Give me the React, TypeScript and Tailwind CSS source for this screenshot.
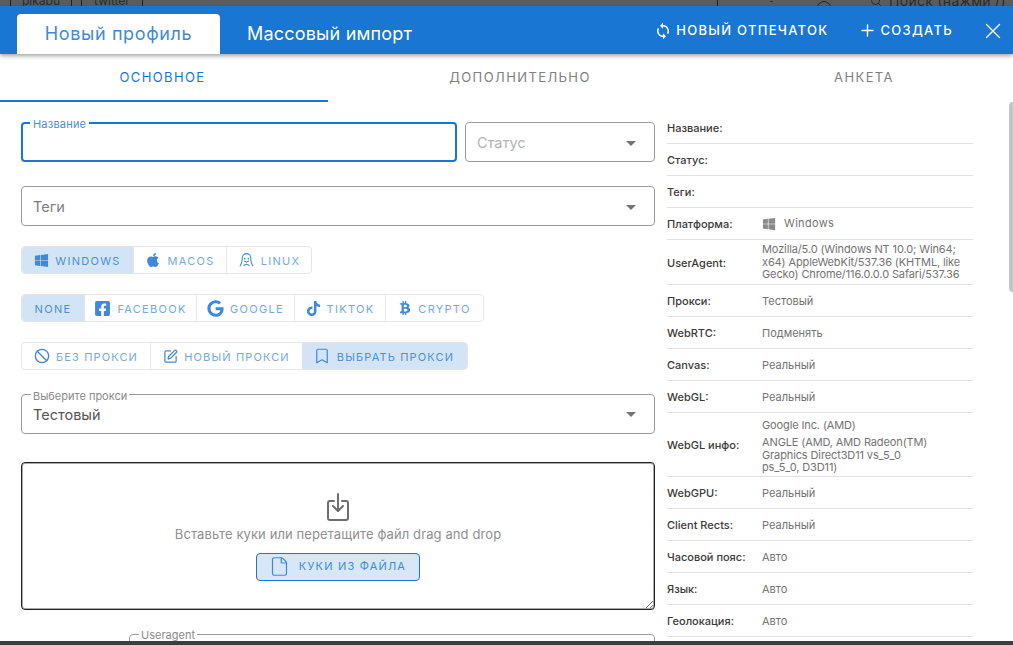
import React from "react";
import { FaWindows, FaApple, FaFacebookSquare, FaGoogle, FaTiktok, FaBtc } from "react-icons/fa";
import { PiLinuxLogo } from "react-icons/pi";
import { MdSync } from "react-icons/md";
import { Ban, SquarePen, Bookmark, File, Plus, X, Search } from "lucide-react";

type Seg = { label: string; icon?: React.ReactNode; w: string; active?: boolean };

function Group({ items, tight }: { items: Seg[]; tight?: boolean }) {
  return (
    <div className="flex h-7 w-fit rounded border border-[#e6e6e6] overflow-hidden">
      {items.map((s, i) => (
        <div
          key={s.label}
          className={`${s.w} flex items-center justify-center gap-1.5 text-[11px] ${tight ? "tracking-[1.15px]" : "tracking-[1.3px]"} ${i > 0 ? "border-l border-[#e6e6e6]" : ""} ${s.active ? "bg-[#d3e4f6] text-[#4a90d9]" : "text-[#74aae3]"}`}
        >
          {s.icon ? <span className="text-[#3f8ad8] flex items-center">{s.icon}</span> : null}
          <span className="pt-[2px]">{s.label}</span>
        </div>
      ))}
    </div>
  );
}

function Caret() {
  return <div className="w-0 h-0 border-x-[5px] border-x-transparent border-t-[5px] border-t-[#757575]" />;
}

function Row({ label, children, h = "h-8", tight }: { label: string; children?: React.ReactNode; h?: string; tight?: boolean }) {
  return (
    <div className={`${h} flex items-center border-b border-[#e0e0e0] shrink-0`}>
      <div className="w-[95px] shrink-0 text-[11px] font-medium text-[#3a3a3a] pt-[2px]">{label}</div>
      <div className={`text-[11px] text-[#737373] ${tight ? "leading-[12.5px] tracking-[-0.12px]" : "pt-[2px]"}`}>{children}</div>
    </div>
  );
}

export default function App() {
  return (
    <div className="relative w-[1013px] h-[645px] overflow-hidden flex flex-col bg-white font-['Inter','Roboto',sans-serif]">
      {/* strip of the page behind the dialog */}
      <div className="h-1.5 shrink-0 bg-[#5c5c5c] overflow-hidden flex items-end text-[12px] text-[#2b2b2b]">
        <div className="ml-[10px] w-[62px] h-4 border-x border-[#222] flex items-end justify-center shrink-0 leading-[10px] translate-y-[6px]"><span className="-translate-y-[6px]">pikabu</span></div>
        <div className="ml-[9px] w-[62px] h-4 border-x border-[#222] flex items-end justify-center shrink-0 leading-[10px] translate-y-[6px]"><span className="-translate-y-[6px]">twitter</span></div>
        <div className="ml-[574px] w-px h-1.5 bg-[#222] shrink-0" />
        <div className="ml-[52px] w-[3px] h-px bg-[#333] mb-[4px] shrink-0" />
        <div className="ml-[44px] w-[14px] h-[14px] shrink-0 rounded-full border border-[#222] translate-y-[9px]" />
        <div className="ml-[39px] shrink-0 flex items-center gap-[7px] translate-y-[2px] tracking-[0.3px] text-[14px] leading-[14px] whitespace-nowrap">
          <Search size={12} />
          <span>Поиск (нажми /)</span>
        </div>
      </div>

      {/* dialog header */}
      <div className="h-12 shrink-0 bg-[#1976d2] flex items-end relative z-10 shadow-[0_2px_4px_rgba(0,0,0,0.35)] text-white">
        <div className="ml-[17px] w-[203px] h-10 bg-white rounded-t flex items-center justify-center pb-[2px] text-[18px] tracking-[0.65px] text-[#3f8ad8]">Новый профиль</div>
        <div className="ml-[27px] h-10 flex items-center text-[18px] pb-[2px] tracking-[0.2px]">Массовый импорт</div>
        <div className="ml-auto h-12 flex items-center text-[13px] font-medium tracking-[1.28px] pr-[7px] pt-[1px]">
          <MdSync size={18} className="mr-1" />
          <span>НОВЫЙ ОТПЕЧАТОК</span>
          <Plus size={19} strokeWidth={1.8} className="ml-[30px] mr-[3px]" />
          <span>СОЗДАТЬ</span>
          <X size={26} strokeWidth={1.3} className="ml-[27px]" />
        </div>
      </div>

      {/* sub tabs */}
      <div className="h-12 shrink-0 flex text-[13px] tracking-[1.4px] text-[#808080]">
        <div className="w-[328px] shrink-0 flex items-center justify-center border-b-2 border-[#1976d2] text-[#1976d2] pt-[2px] pr-[3px]">ОСНОВНОЕ</div>
        <div className="w-[384px] shrink-0 flex items-center justify-center">ДОПОЛНИТЕЛЬНО</div>
        <div className="w-[304px] shrink-0 flex items-center justify-center">АНКЕТА</div>
      </div>

      {/* scrollable body */}
      <div className="flex-1 min-h-0 flex overflow-hidden relative">
        <div className="w-[634px] ml-[21px] shrink-0 pt-5 flex flex-col">
          <div className="flex gap-2 h-10 shrink-0">
            <div className="relative w-[436px] h-10 rounded border-2 border-[#1976d2]">
              <span className="absolute left-[7px] -top-[6px] bg-white px-[3px] text-[11px] leading-[12px] tracking-[0.2px] text-[#4a90d9]">Название</span>
            </div>
            <div className="w-[190px] h-10 rounded border border-[#9a9a9a] flex items-center justify-between pl-[11px] pr-[18px] pt-[2px] text-[14.5px] text-[#b3b3b3]">
              <span>Статус</span>
              <Caret />
            </div>
          </div>
          <div className="mt-[24px] h-10 shrink-0 rounded border border-[#9a9a9a] flex items-center justify-between pl-[11px] pr-[18px] pt-[2px] text-[14.5px] text-[#808080]">
            <span>Теги</span>
            <Caret />
          </div>

          <div className="mt-5">
            <Group items={[
              { label: "WINDOWS", icon: <FaWindows size={15} />, w: "w-[111px]", active: true },
              { label: "MACOS", icon: <FaApple size={16} />, w: "w-[93px]" },
              { label: "LINUX", icon: <PiLinuxLogo size={17} />, w: "w-[85px]" },
            ]} />
          </div>
          <div className="mt-5">
            <Group items={[
              { label: "NONE", w: "w-[62px]", active: true },
              { label: "FACEBOOK", icon: <FaFacebookSquare size={17} />, w: "w-[112px]" },
              { label: "GOOGLE", icon: <FaGoogle size={17} />, w: "w-[98px]" },
              { label: "TIKTOK", icon: <FaTiktok size={15} />, w: "w-[91px]" },
              { label: "CRYPTO", icon: <FaBtc size={14} />, w: "w-[98px]" },
            ]} />
          </div>
          <div className="mt-5">
            <Group tight items={[
              { label: "БЕЗ ПРОКСИ", icon: <Ban size={16} />, w: "w-[128px]" },
              { label: "НОВЫЙ ПРОКСИ", icon: <SquarePen size={15} />, w: "w-[152px]" },
              { label: "ВЫБРАТЬ ПРОКСИ", icon: <Bookmark size={18} strokeWidth={1.6} />, w: "w-[165px] pr-[3px]", active: true },
            ]} />
          </div>

          <div className="relative mt-6 h-10 shrink-0 rounded border border-[#9a9a9a] flex items-center justify-between pl-[11px] pr-[18px] pt-[1px] text-[14.5px] text-[#555]">
            <span className="absolute left-[9px] -top-[4px] bg-white px-[2px] text-[11px] leading-[11px] text-[#8a8a8a]">Выберите прокси</span>
            <span>Тестовый</span>
            <Caret />
          </div>

          <div className="relative mt-7 h-[148px] shrink-0 rounded border border-[#222] shadow-[inset_0_0_0_1px_#aaa] flex flex-col items-center pt-[30px]">
            <svg className="ml-[2px]" width="24" height="29" viewBox="0 0 24 29" fill="none" stroke="#6e6e6e" strokeWidth="2" strokeLinecap="round" strokeLinejoin="round">
              <path d="M7 8H3a2 2 0 0 0-2 2v15a2 2 0 0 0 2 2h16a2 2 0 0 0 2-2V10a2 2 0 0 0-2-2h-4" />
              <path d="M11 1v17" />
              <path d="M6 13l5 5 5-5" />
            </svg>
            <div className="mt-[3px] text-[13px] tracking-[0.1px] text-[#8f8f8f]">Вставьте куки или перетащите файл drag and drop</div>
            <div className="mt-2 w-[164px] h-7 rounded border border-[#1976d2] bg-[#d7e7f7] flex items-center justify-center gap-[9px] pr-[1px] text-[11px] tracking-[1.2px] text-[#3f8ad8]">
              <File size={21} strokeWidth={1.4} />
              <span>КУКИ ИЗ ФАЙЛА</span>
            </div>
            <svg className="absolute right-[1px] bottom-[1px]" width="8" height="8" viewBox="0 0 8 8" stroke="#777" strokeWidth="1">
              <path d="M1 8L8 1M5 8l3-3" />
            </svg>
          </div>

          <div className="relative mt-6 ml-[108px] h-10 shrink-0 rounded border border-[#9a9a9a]">
            <span className="absolute left-[9px] -top-[5px] bg-white px-[2px] text-[11px] leading-[11px] text-[#8a8a8a]">Useragent</span>
          </div>
        </div>

        {/* summary column */}
        <div className="w-[306px] ml-[12px] shrink-0 flex flex-col pt-[10px]">
          <Row label="Название:" />
          <Row label="Статус:" />
          <Row label="Теги:" />
          <Row label="Платформа:">
            <span className="flex items-center gap-2 -mt-[2px] tracking-[0.3px]">
              <FaWindows size={14} className="text-[#8a8a8a]" />
              Windows
            </span>
          </Row>
          <Row label="UserAgent:" h="h-[45px]" tight>
            Mozilla/5.0 (Windows NT 10.0; Win64;<br />x64) AppleWebKit/537.36 (KHTML, like<br />Gecko) Chrome/116.0.0.0 Safari/537.36
          </Row>
          <Row label="Прокси:">Тестовый</Row>
          <Row label="WebRTC:">Подменять</Row>
          <Row label="Canvas:">Реальный</Row>
          <Row label="WebGL:">Реальный</Row>
          <Row label="WebGL инфо:" h="h-[64px]" tight>
            <div className="mt-[3px] mb-[5px]">Google Inc. (AMD)</div>
            ANGLE (AMD, AMD Radeon(TM)<br />Graphics Direct3D11 vs_5_0<br />ps_5_0, D3D11)
          </Row>
          <Row label="WebGPU:">Реальный</Row>
          <Row label="Client Rects:">Реальный</Row>
          <Row label="Часовой пояс:">Авто</Row>
          <Row label="Язык:">Авто</Row>
          <Row label="Геолокация:">Авто</Row>
        </div>
        <div className="absolute right-0 top-0 w-1 h-[190px] rounded-l bg-[#c4c4c4]" />
      </div>

      <div className="absolute left-0 right-0 bottom-0 h-1 bg-[#3e3e3e]" />
    </div>
  );
}
